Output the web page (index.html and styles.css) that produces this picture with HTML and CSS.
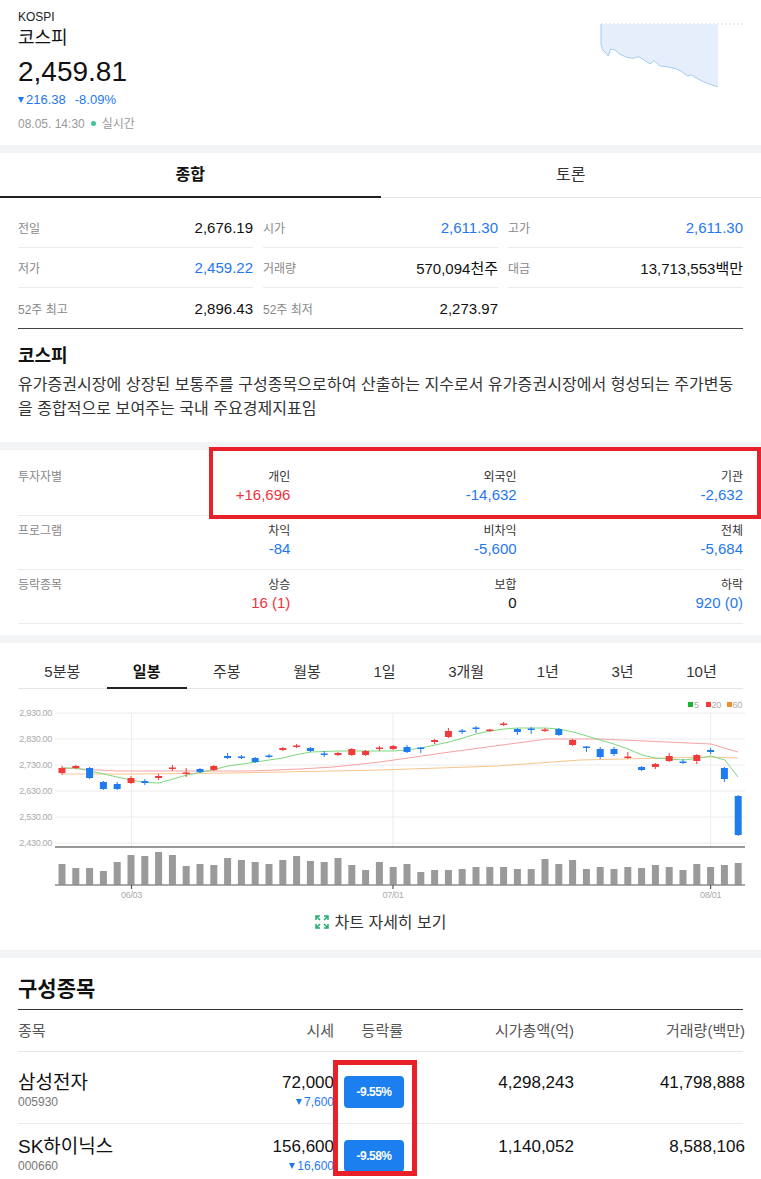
FILE: index.html
```html
<!DOCTYPE html>
<html lang="ko">
<head>
  <meta charset="UTF-8">
  <title>코스피</title>
  <link rel="stylesheet" href="styles.css">
</head>
<body>
  <div class="summary">
    <div class="summary-info">
      <div class="idx-code">KOSPI</div>
      <div class="idx-name">코스피</div>
      <div class="idx-price">2,459.81</div>
      <div class="idx-change down"><span class="tri"></span>216.38<span class="idx-rate">-8.09%</span></div>
      <div class="idx-time">08.05. 14:30<span class="live-dot"></span>실시간</div>
    </div>
    <svg class="spark" width="145" height="70" viewBox="0 0 145 70">
      <line x1="1" y1="2" x2="145" y2="2" stroke="#dcdcdc" stroke-dasharray="2 2"/>
      <path d="M1 2 L118 2 L118 64.7 L111.7 63 L103.3 59.7 L96.7 56.3 L91.7 53 L87.7 54 L81.7 49.7 L76.7 47 L66.7 44.7 L60 44 L54 38.7 L50 42 L43.3 37.3 L38.3 34.7 L33.3 36.3 L26.7 35.3 L20 32.3 L15 28 L10.7 27 L8.3 34 L5 30 L2.7 28 L1 23 Z" fill="#e5eefa"/>
      <polyline points="1,2 1,23 2.7,28 5,30 8.3,34 10.7,27 15,28 20,32.3 26.7,35.3 33.3,36.3 38.3,34.7 43.3,37.3 50,42 54,38.7 60,44 66.7,44.7 76.7,47 81.7,49.7 87.7,54 91.7,53 96.7,56.3 103.3,59.7 111.7,63 117.7,64.7" fill="none" stroke="#a3cbf4" stroke-width="1"/>
    </svg>
  </div>

  <div class="band"></div>

  <div class="main-tabs">
    <div class="main-tab active">종합</div>
    <div class="main-tab">토론</div>
  </div>

  <div class="stats">
    <div class="stat"><span class="stat-label">전일</span><span class="stat-value">2,676.19</span></div>
    <div class="stat"><span class="stat-label">시가</span><span class="stat-value down">2,611.30</span></div>
    <div class="stat"><span class="stat-label">고가</span><span class="stat-value down">2,611.30</span></div>
    <div class="stat"><span class="stat-label">저가</span><span class="stat-value down">2,459.22</span></div>
    <div class="stat"><span class="stat-label">거래량</span><span class="stat-value">570,094천주</span></div>
    <div class="stat"><span class="stat-label">대금</span><span class="stat-value">13,713,553백만</span></div>
    <div class="stat last"><span class="stat-label">52주 최고</span><span class="stat-value">2,896.43</span></div>
    <div class="stat last"><span class="stat-label">52주 최저</span><span class="stat-value">2,273.97</span></div>
    <div class="stat last"></div>
  </div>

  <div class="about">
    <h2>코스피</h2>
    <p>유가증권시장에 상장된 보통주를 구성종목으로하여 산출하는 지수로서 유가증권시장에서 형성되는 주가변동을 종합적으로 보여주는 국내 주요경제지표임</p>
  </div>

  <div class="band"></div>

  <div class="investors">
    <div class="inv-row">
      <div class="inv-title">투자자별</div>
      <div class="inv-cell"><div class="inv-name">개인</div><div class="inv-num up">+16,696</div></div>
      <div class="inv-cell"><div class="inv-name">외국인</div><div class="inv-num down">-14,632</div></div>
      <div class="inv-cell"><div class="inv-name">기관</div><div class="inv-num down">-2,632</div></div>
    </div>
    <div class="inv-row">
      <div class="inv-title">프로그램</div>
      <div class="inv-cell"><div class="inv-name">차익</div><div class="inv-num down">-84</div></div>
      <div class="inv-cell"><div class="inv-name">비차익</div><div class="inv-num down">-5,600</div></div>
      <div class="inv-cell"><div class="inv-name">전체</div><div class="inv-num down">-5,684</div></div>
    </div>
    <div class="inv-row">
      <div class="inv-title">등락종목</div>
      <div class="inv-cell"><div class="inv-name">상승</div><div class="inv-num up">16 (1)</div></div>
      <div class="inv-cell"><div class="inv-name">보합</div><div class="inv-num">0</div></div>
      <div class="inv-cell"><div class="inv-name">하락</div><div class="inv-num down">920 (0)</div></div>
    </div>
    <div class="mark mark-investor"></div>
  </div>

  <div class="band"></div>

  <div class="chart">
    <div class="chart-tabs">
      <div class="chart-tab">5분봉</div>
      <div class="chart-tab active">일봉</div>
      <div class="chart-tab">주봉</div>
      <div class="chart-tab">월봉</div>
      <div class="chart-tab">1일</div>
      <div class="chart-tab">3개월</div>
      <div class="chart-tab">1년</div>
      <div class="chart-tab">3년</div>
      <div class="chart-tab">10년</div>
    </div>
    <svg id="chart" class="chart-svg" width="727" height="213" viewBox="18 689 727 213">
      <g class="legend">
        <rect x="688" y="702" width="5" height="5" fill="#19b32f"/><text x="694" y="707.5">5</text>
        <rect x="706" y="702" width="5" height="5" fill="#f23b3b"/><text x="711.5" y="707.5">20</text>
        <rect x="727" y="702" width="5" height="5" fill="#f5892b"/><text x="732.5" y="707.5">60</text>
      </g>
      <g class="grid">
        <line x1="55" y1="713" x2="745" y2="713"/>
        <line x1="55" y1="739" x2="745" y2="739"/>
        <line x1="55" y1="765" x2="745" y2="765"/>
        <line x1="55" y1="791" x2="745" y2="791"/>
        <line x1="55" y1="817" x2="745" y2="817"/>
        <line x1="55" y1="843" x2="745" y2="843"/>
        <line x1="131.5" y1="713" x2="131.5" y2="847"/>
        <line x1="393" y1="713" x2="393" y2="847"/>
        <line x1="710.6" y1="713" x2="710.6" y2="847"/>
      </g>
      <g class="axis-labels">
        <text x="52" y="716">2,930.00</text>
        <text x="52" y="742">2,830.00</text>
        <text x="52" y="768">2,730.00</text>
        <text x="52" y="794">2,630.00</text>
        <text x="52" y="820">2,530.00</text>
        <text x="52" y="846">2,430.00</text>
      </g>
      <polyline class="ma ma60" points="62,774 132,774 233,773 380,770 497,766 580,760 711,757 738,758"/>
      <polyline class="ma ma20" points="62,768 117,771 250,771 300,769 333,767 380,762 450,752 547,739 600,739 711,744 738,752"/>
      <polyline class="ma ma5" points="62,768 76,768 90,771 104,774 117,777 131,780 145,782.5 159,783 173,779 187,775 200,772.5 214,769.5 228,766 242,764 256,762 269,760 283,758 297,754.5 311,752 338,751 366,751 393,751 407,750 421,748 435,745 449,742 463,738 476,734 490,731 504,729 518,728 545,728 559,729 573,732 587,736 600,740 614,744 628,749 642,755 655,758 669,759 683,760 697,758.5 711,756 725,760 738,777"/>
      <g id="candles"></g>
      <line x1="55" y1="847" x2="745" y2="847" stroke="#333" stroke-width="1.2"/>
      <g id="volumes"></g>
      <line x1="55" y1="885" x2="745" y2="885" stroke="#8c8c8c" stroke-width="1.5"/>
      <g class="ticks">
        <line x1="131.5" y1="885" x2="131.5" y2="889"/>
        <line x1="393" y1="885" x2="393" y2="889"/>
        <line x1="710.6" y1="885" x2="710.6" y2="889"/>
      </g>
      <g class="date-labels">
        <text x="131.5" y="898">06/03</text>
        <text x="393" y="898">07/01</text>
        <text x="710.6" y="898">08/01</text>
      </g>
    </svg>
    <div class="chart-more">
      <svg class="more-icon" width="14" height="14" viewBox="0 0 14 14">
        <path d="M1 5V1H5M1 1L5 5M9 1H13V5M13 1L9 5M1 9V13H5M1 13L5 9M13 9V13H9M13 13L9 9" fill="none" stroke="#1fae74" stroke-width="1.5"/>
      </svg>차트 자세히 보기
    </div>
  </div>

  <div class="band"></div>

  <div class="stocks">
    <h2 class="stocks-title">구성종목</h2>
    <div class="stock-head">
      <div>종목</div>
      <div class="num">시세</div>
      <div class="num rate-head">등락률</div>
      <div class="num">시가총액(억)</div>
      <div class="num">거래량(백만)</div>
    </div>
    <div class="stock-row first">
      <div><div class="stock-name">삼성전자</div><div class="stock-code">005930</div></div>
      <div class="num"><div class="stock-price">72,000</div><div class="stock-diff down"><span class="tri"></span>7,600</div></div>
      <div><span class="badge">-9.55%</span></div>
      <div class="num stock-val">4,298,243</div>
      <div class="num stock-val">41,798,888</div>
    </div>
    <div class="stock-row">
      <div><div class="stock-name">SK하이닉스</div><div class="stock-code">000660</div></div>
      <div class="num"><div class="stock-price">156,600</div><div class="stock-diff down"><span class="tri"></span>16,600</div></div>
      <div><span class="badge">-9.58%</span></div>
      <div class="num stock-val">1,140,052</div>
      <div class="num stock-val">8,588,106</div>
    </div>
    <div class="mark mark-rate"></div>
  </div>

  <script src="chart.js"></script>
</body>
</html>
```

FILE: styles.css
```css
body {
  margin: 0;
  width: 761px;
  font-family: "Liberation Sans", "Noto Sans CJK KR", sans-serif;
  color: #111;
  background: #fff;
}

.up {
  color: #f0323c;
}

.down {
  color: #1f78f0;
}

.tri {
  display: inline-block;
  width: 0;
  height: 0;
  border-left: 3.5px solid transparent;
  border-right: 3.5px solid transparent;
  border-top: 6px solid currentColor;
  margin-right: 2px;
  vertical-align: 1px;
}

.band {
  height: 8px;
  background: #f3f4f6;
}

/* 상단 지수 요약 */
.summary {
  display: flex;
  justify-content: space-between;
  align-items: flex-start;
  height: 145px;
  box-sizing: border-box;
  padding: 10px 16px 0 18px;
}

.idx-code {
  font-size: 12px;
  line-height: 14px;
  color: #222;
}

.idx-name {
  margin-top: 2px;
  font-size: 18px;
  line-height: 24px;
}

.idx-price {
  margin-top: 5px;
  font-size: 28px;
  line-height: 34px;
}

.idx-change {
  margin-top: 2px;
  font-size: 13px;
  line-height: 18px;
}

.idx-rate {
  margin-left: 9px;
}

.idx-time {
  margin-top: 7px;
  font-size: 12px;
  line-height: 16px;
  color: #999;
}

.live-dot {
  display: inline-block;
  width: 5px;
  height: 5px;
  border-radius: 50%;
  background: #3fc59c;
  margin: 0 6px 0 6px;
  vertical-align: 2px;
}

.spark {
  display: block;
  margin-top: 12px;
}

/* 종합 / 토론 탭 */
.main-tabs {
  display: flex;
}

.main-tab {
  flex: 1;
  height: 45px;
  box-sizing: border-box;
  line-height: 43px;
  text-align: center;
  font-size: 16px;
  color: #333;
  border-bottom: 1px solid #e5e5e5;
}

.main-tab.active {
  font-weight: bold;
  color: #111;
  border-bottom: 2px solid #222;
}

/* 시세 요약 */
.stats {
  display: grid;
  grid-template-columns: repeat(3, 1fr);
  column-gap: 10px;
  margin: 0 18px;
  padding-top: 10px;
  border-bottom: 1px solid #444;
}

.stat {
  display: flex;
  justify-content: space-between;
  align-items: center;
  height: 40px;
  box-sizing: border-box;
  border-bottom: 1px solid #ebebeb;
}

.stat.last {
  border-bottom: 0;
}

.stat-label {
  font-size: 12px;
  color: #888;
}

.stat-value {
  font-size: 15px;
}

/* 지수 설명 */
.about {
  padding: 16px 18px 21px;
}

.about h2 {
  margin: 0;
  font-size: 18px;
  line-height: 22px;
}

.about p {
  margin: 6px 0 0;
  font-size: 16px;
  line-height: 24px;
  letter-spacing: 0.05px;
  word-break: break-all;
  color: #333;
}

/* 투자자별 매매 */
.investors {
  position: relative;
  padding: 12px 18px 11px;
}

.inv-row {
  display: grid;
  grid-template-columns: 46px repeat(3, 1fr);
  padding: 6px 0 11px;
  line-height: 18px;
  border-bottom: 1px solid #ebebeb;
}

.inv-row:last-of-type {
  border-bottom: 0;
}

.inv-title {
  font-size: 12px;
  color: #888;
  white-space: nowrap;
}

.inv-cell {
  text-align: right;
}

.inv-name {
  font-size: 12px;
  color: #333;
}

.inv-num {
  font-size: 15px;
}

/* 빨간 표시 박스 */
.mark {
  position: absolute;
  border: 4px solid #e8202a;
}

.mark-investor {
  left: 209px;
  top: -3px;
  width: 544px;
  height: 64px;
}

.mark-rate {
  left: 333px;
  top: 102px;
  width: 74px;
  height: 106px;
  border-width: 5px;
}

/* 차트 */
.chart {
  padding: 6px 0 17px;
}

.chart-tabs {
  display: flex;
  margin: 0 18px;
  border-bottom: 1px solid #e5e5e5;
}

.chart-tab {
  flex: 1 1 auto;
  text-align: center;
  font-size: 15px;
  line-height: 30px;
  padding-top: 8px;
  color: #333;
  border-bottom: 2px solid transparent;
  margin-bottom: -1px;
}

.chart-tab.active {
  font-weight: bold;
  color: #111;
  border-bottom-color: #222;
}

.chart-svg {
  display: block;
  margin: 0 18px;
  font-family: "Liberation Sans", sans-serif;
}

.legend text,
.axis-labels text,
.date-labels text {
  font-size: 9px;
  fill: #aaa;
  letter-spacing: -0.3px;
}

.axis-labels text {
  text-anchor: end;
}

.date-labels text {
  text-anchor: middle;
}

.grid line {
  stroke: #ececec;
  stroke-width: 1;
}

.ticks line {
  stroke: #555;
  stroke-width: 1.2;
}

.ma {
  fill: none;
  stroke-width: 1;
}

.ma5 {
  stroke: #7fd87f;
}

.ma20 {
  stroke: #f7a3a3;
}

.ma60 {
  stroke: #f8c48e;
}

.chart-more {
  margin-top: 11px;
  text-align: center;
  font-size: 16px;
  line-height: 20px;
  color: #333;
}

.more-icon {
  vertical-align: -1px;
  margin-right: 6px;
}

/* 구성종목 */
.stocks {
  position: relative;
  padding: 18px 18px 0;
}

.stocks-title {
  margin: 0;
  font-size: 21px;
  line-height: 26px;
  padding-bottom: 7px;
  border-bottom: 1px solid #333;
}

.stock-head,
.stock-row {
  display: grid;
  grid-template-columns: 245px 71px 80px 160px 171px;
}

.stock-head {
  line-height: 41px;
  font-size: 15px;
  color: #555;
  border-bottom: 1px solid #e5e5e5;
}

.num {
  text-align: right;
}

.rate-head {
  padding-right: 11px;
}

.stock-row {
  padding: 11px 0 14px;
  border-bottom: 1px solid #ebebeb;
}

.stock-row.first {
  padding-top: 19px;
}

.stock-name {
  font-size: 19px;
  line-height: 24px;
}

.stock-code {
  font-size: 12px;
  line-height: 14px;
  color: #777;
}

.stock-price,
.stock-val {
  font-size: 17px;
  line-height: 24px;
}

.stock-diff {
  font-size: 12px;
  line-height: 14px;
}

.badge {
  display: block;
  width: 60px;
  height: 32px;
  margin: 5px 0 0 10px;
  line-height: 32px;
  border-radius: 4px;
  background: #1b7ff0;
  color: #fff;
  font-size: 12px;
  font-weight: bold;
  text-align: center;
  letter-spacing: -0.5px;
}
```

FILE: chart.js
```js
// 일봉 데이터: [상승/하락, 몸통 위, 몸통 아래, 꼬리 위, 꼬리 아래]
var candles = [
  ['u', 768, 773, 766, 775], ['u', 766, 768, 765, 769], ['d', 768, 778, 767, 779],
  ['d', 782, 789, 781, 790], ['d', 784, 789, 782, 790], ['u', 778, 783, 776, 784],
  ['d', 781, 783, 779, 785], ['u', 776, 778, 774, 780], ['u', 767.5, 769, 765, 771],
  ['u', 772.5, 774, 768, 777], ['d', 769, 772, 768, 773], ['u', 766, 770, 765, 771],
  ['d', 756, 758, 753, 759], ['d', 756.5, 758, 755, 759], ['d', 758, 762, 757, 763],
  ['d', 755.5, 757, 754, 758], ['u', 748, 750, 747, 751], ['u', 745.5, 747, 744, 748],
  ['d', 748, 751, 747, 752], ['d', 753.5, 755, 751, 757], ['u', 753, 755, 752, 756],
  ['u', 749, 755, 748, 756], ['u', 751, 755, 750, 756], ['u', 747.5, 749, 746, 751],
  ['u', 746, 749, 745, 750], ['d', 747, 752, 745, 753], ['d', 747.5, 749, 747, 753],
  ['u', 740, 742, 739, 744], ['u', 731, 737, 728, 738], ['d', 730.5, 732, 729, 734],
  ['d', 727.5, 729, 726, 733], ['u', 729.5, 731, 729, 732], ['u', 723.5, 725, 722, 726],
  ['d', 729, 732, 728, 735], ['d', 728.5, 730, 727, 734], ['u', 729.5, 731, 728, 732],
  ['d', 729, 735, 728, 736], ['u', 740, 745, 739, 746], ['d', 746.5, 748, 746, 752],
  ['d', 749, 757, 747, 759], ['d', 749, 754, 747, 756], ['u', 756.5, 758, 752, 759],
  ['d', 767, 770, 766, 771], ['u', 764, 767, 763, 769], ['u', 756, 761, 753, 762],
  ['d', 761.5, 763, 759, 764], ['u', 755, 761, 754, 764], ['d', 750, 752, 748, 754],
  ['d', 768, 779, 767, 782], ['d', 796, 835, 795, 836]
];

// 거래량 막대 윗변 y
var volumes = [
  864, 868, 868, 871, 862, 855, 856, 852, 855, 866,
  864, 865, 858, 860, 862, 864, 860, 856, 861, 862,
  858, 865, 870, 862, 867, 864, 872, 870, 870, 869,
  867, 867, 867, 869, 869, 859, 864, 860, 869, 867,
  869, 867, 868, 865, 867, 870, 864, 867, 865, 863
];

var NS = 'http://www.w3.org/2000/svg';
var X0 = 62;
var STEP = 13.8;
var W = 7;

function el(name, attrs, parent) {
  var node = document.createElementNS(NS, name);
  for (var k in attrs) node.setAttribute(k, attrs[k]);
  parent.appendChild(node);
  return node;
}

var candleGroup = document.getElementById('candles');
candles.forEach(function (c, i) {
  var x = X0 + i * STEP;
  var color = c[0] === 'u' ? '#f23b3b' : '#1e7cf0';
  el('line', { x1: x, y1: c[3], x2: x, y2: c[4], stroke: color, 'stroke-width': 1 }, candleGroup);
  el('rect', { x: x - W / 2, y: c[1], width: W, height: Math.max(c[2] - c[1], 1.5), fill: color }, candleGroup);
});

var volGroup = document.getElementById('volumes');
volumes.forEach(function (top, i) {
  var x = X0 + i * STEP;
  el('rect', { x: x - W / 2, y: top, width: W, height: 885 - top, fill: '#9a9a9a' }, volGroup);
});
```
